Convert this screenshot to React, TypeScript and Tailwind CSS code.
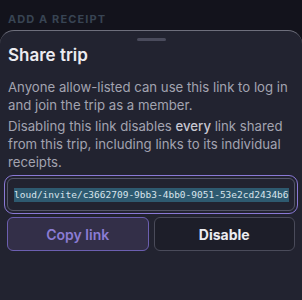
import React from "react";

export default function App() {
  return (
    <div className="w-[302px] h-[300px] overflow-hidden bg-[#13131c] flex flex-col" style={{ fontFamily: "Inter, 'Noto Sans', sans-serif" }}>
      <div className="h-[30px] pl-[8px] pt-[13px] text-[11px] font-bold tracking-[0.1em] leading-[12px] text-[#384453]">ADD A RECEIPT</div>
      <div className="flex-1 rounded-t-[14px] border-t border-[#6e6f7c] bg-[#222330] flex flex-col px-[8px]">
        <div className="flex justify-center pt-[7px]">
          <div className="w-[29px] h-[3px] rounded-full bg-[#4a4b5c]" />
        </div>
        <div className="mt-[2px] text-[17px] font-semibold leading-[24px] text-[#ececf1]">Share trip</div>
        <p className="mt-[11px] text-[13.2px] leading-[18px] text-[#a3a3b0]">Anyone allow-listed can use this link to log in and join the trip as a member.</p>
        <p className="mt-[3px] text-[13.2px] leading-[18px] text-[#a3a3b0]">Disabling this link disables <span className="font-medium text-[#c8c8d2]">every</span> link shared from this trip, including links to its individual receipts.</p>
        <div className="mt-[4px] -mx-[4px] rounded-[9px] border-[1.5px] border-[#8a79d6] p-[2px]">
          <div className="h-[33px] rounded-[6px] border border-[#55566a] flex items-center overflow-hidden pl-[6px]">
            <span className="whitespace-nowrap bg-[#2e5a70] text-[#d8e4ec] text-[9.5px] leading-[14px]" style={{ fontFamily: "'DejaVu Sans Mono', monospace" }}>loud/invite/c3662709-9bb3-4bb0-9051-53e2cd2434b6</span>
          </div>
        </div>
        <div className="mt-[3px] flex gap-[5px] -mx-[1px]">
          <button className="flex-1 h-[34px] rounded-[6px] border border-[#6c5fb0] bg-[#332f48] text-[#8b7cd4] text-[14px] font-semibold">Copy link</button>
          <button className="flex-1 h-[34px] rounded-[6px] border border-[#4a4b5a] bg-[#1d1e29] text-[#ececf1] text-[14px] font-bold">Disable</button>
        </div>
      </div>
    </div>
  );
}
